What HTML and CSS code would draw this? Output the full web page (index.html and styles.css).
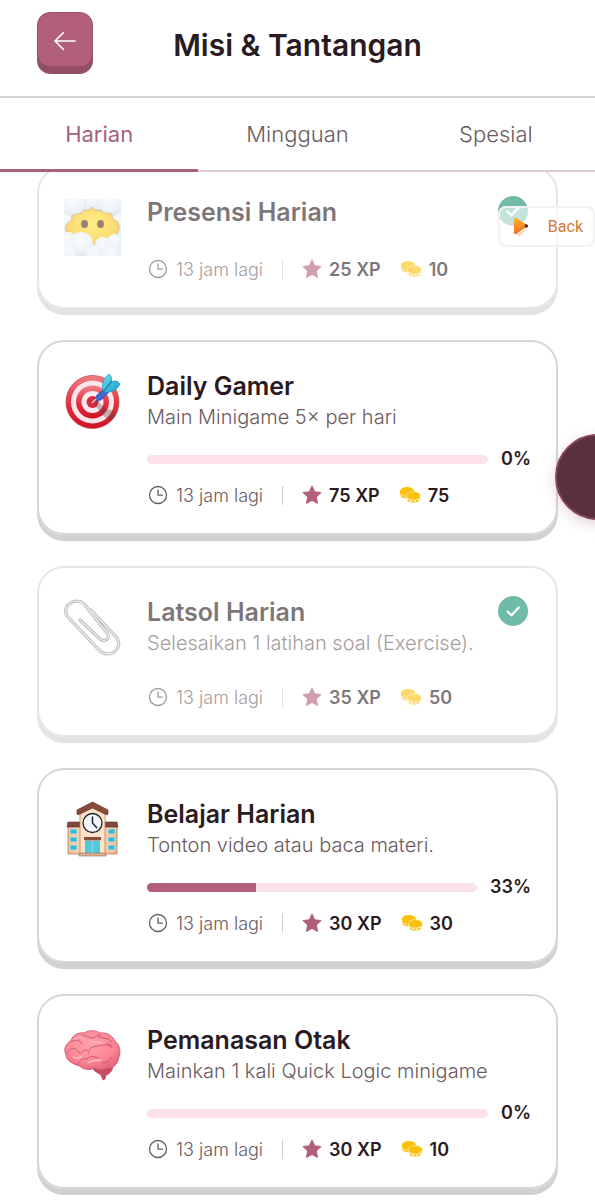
FILE: index.html
```html
<!DOCTYPE html>
<html lang="id">
<head>
<meta charset="utf-8">
<meta name="viewport" content="width=device-width, initial-scale=1">
<title>Misi &amp; Tantangan</title>
<link rel="stylesheet" href="styles.css">
</head>
<body>
<svg class="sprite" aria-hidden="true">
  <symbol id="clock" viewBox="0 0 22 22"><g fill="none" stroke="currentColor" stroke-width="1.300" stroke-linecap="round" stroke-linejoin="round"><circle cx="11" cy="11" r="8.500"/><path d="M11 6v5.200h4.500"/></g></symbol>
  <symbol id="star" viewBox="0 0 20 20"><path d="M10 1.200l2.500 5.600 6.200.7-4.500 4.300 1.200 6.400L10 15.200l-5.400 3 1.200-6.400L1.300 7.500l6.200-.7z" fill="#b15f7c" stroke="#b15f7c" stroke-width="1.200" stroke-linejoin="round"/></symbol>
  <symbol id="coins" viewBox="0 0 22 18"><path d="M1 5v3.500c1 3 4 4 7 4V8z" fill="#fbc108"/><ellipse cx="8" cy="5.200" rx="7.200" ry="4.300" fill="#fbc108"/><path d="M1 7.500c2 3 6 3.200 9 2" fill="none" stroke="#fff" stroke-width="1" stroke-dasharray="2 1.400"/><path d="M7.300 10v3c1 3 4 4 7.300 4s6-1.500 6.700-4v-3z" fill="#fbc108" stroke="#fff" stroke-width=".6"/><ellipse cx="14.300" cy="9.800" rx="7.200" ry="4.200" fill="#fbc108" stroke="#fff" stroke-width=".5"/><path d="M7.800 12.500c2.500 3.500 10.500 3.500 13 0" fill="none" stroke="#fff" stroke-width="1.200" stroke-dasharray="2.200 1.600"/></symbol>
  <symbol id="check" viewBox="0 0 30 30"><circle cx="15" cy="15" r="15" fill="#118d70"/><path d="M9.500 15.500l4 3.800 7.500-8" fill="none" stroke="#fff" stroke-width="2.200" stroke-linecap="round" stroke-linejoin="round"/></symbol>
</svg>

<header class="header">
  <button class="back-button" type="button" aria-label="Kembali">
    <svg width="24" height="24" viewBox="0 0 24 24" fill="none" stroke="#fff" stroke-width="1.600" stroke-linecap="round" stroke-linejoin="round" aria-hidden="true"><path d="M22 12H2M10.500 3.500L2 12l8.500 8.500"/></svg>
  </button>
  <h1 class="title">Misi &amp; Tantangan</h1>
</header>
<nav class="tabs">
  <button class="tab tab-active" type="button">Harian</button>
  <button class="tab" type="button">Mingguan</button>
  <button class="tab" type="button">Spesial</button>
</nav>

<main class="list">
  <article class="card card-done">
    <svg class="emoji" viewBox="0 0 57 57" aria-hidden="true">
      <defs>
        <radialGradient id="face" cx=".5" cy=".45" r=".6"><stop offset="0" stop-color="#ffe53a"/><stop offset="1" stop-color="#f8bc08"/></radialGradient>
        <radialGradient id="puff" cx=".45" cy=".35" r=".65"><stop offset="0" stop-color="#f6fafd"/><stop offset=".7" stop-color="#e2edf5"/><stop offset="1" stop-color="#c6d7e3"/></radialGradient>
        <clipPath id="square"><path d="M0 0h57v57H0z"/></clipPath>
      </defs>
      <g clip-path="url(#square)">
        <path fill="#d5e4ee" d="M0 0h57v57H0z"/>
        <circle cx="4" cy="19" r="11" fill="url(#puff)"/><circle cx="53" cy="19" r="11" fill="url(#puff)"/><circle cx="28" cy="1" r="12" fill="url(#puff)"/><circle cx="10" cy="5" r="13" fill="url(#puff)"/><circle cx="47" cy="4" r="13" fill="url(#puff)"/>
        <path d="M2 29c0-4 2-6 6-8-1-4 1-6 6-6 3 0 4-1 6-4 3 1 5 1 8-3 3 4 5 4 9 3 1 3 3 4 7 3 4 0 5 3 4 6 4 1 7 4 7 8-1 9-7 16-18 17H17C7 43 3 38 2 29z" fill="url(#face)" stroke="#dc9b4b" stroke-width="1.200"/>
        <ellipse cx="20.500" cy="25" rx="3.500" ry="4" fill="#5b2c13"/><ellipse cx="36.500" cy="25" rx="3.500" ry="4" fill="#5b2c13"/>
        <circle cx="4" cy="41" r="8" fill="url(#puff)"/><circle cx="51" cy="43" r="8" fill="url(#puff)"/><circle cx="39" cy="46" r="8" fill="url(#puff)"/><circle cx="17" cy="45" r="12" fill="url(#puff)"/><circle cx="5" cy="53" r="9" fill="url(#puff)"/><circle cx="30" cy="56" r="9" fill="url(#puff)"/><circle cx="47" cy="55" r="10" fill="url(#puff)"/>
      </g>
    </svg>
    <div class="body">
      <h2 class="name">Presensi Harian</h2>
      <div class="meta">
        <span class="time"><svg class="clock"><use href="#clock"/></svg>13 jam lagi</span>
        <span class="reward xp"><svg class="star"><use href="#star"/></svg>25 XP</span>
        <span class="reward"><svg class="coins"><use href="#coins"/></svg>10</span>
      </div>
    </div>
    <svg class="badge" role="img" aria-label="Selesai"><use href="#check"/></svg>
  </article>

  <article class="card">
    <svg class="emoji" viewBox="0 0 57 57" aria-hidden="true">
      <defs>
        <linearGradient id="ring" x1="0" y1="0" x2="0" y2="1"><stop offset="0" stop-color="#ef7f86"/><stop offset=".55" stop-color="#e52d3c"/><stop offset="1" stop-color="#d01326"/></linearGradient>
        <linearGradient id="feather" x1="0" y1="0" x2="1" y2="1"><stop offset="0" stop-color="#75e2ef"/><stop offset="1" stop-color="#159cc7"/></linearGradient>
        <clipPath id="disc"><circle cx="28.500" cy="29" r="27"/></clipPath>
      </defs>
      <circle cx="28.500" cy="29" r="26.500" fill="url(#ring)" stroke="#c64650" stroke-width=".8"/>
      <circle cx="28.500" cy="29" r="21.500" fill="#fbe5e9"/>
      <circle cx="28.500" cy="29" r="16.500" fill="url(#ring)"/>
      <circle cx="28.500" cy="29" r="11" fill="#fdeaee"/>
      <circle cx="28.500" cy="29" r="6" fill="#dc2b39"/>
      <path d="M29 30l5-2 8 8c6 0 10 3 11 7l-7 5-9-7-3-5z" fill="#5a4248" opacity=".35" clip-path="url(#disc)"/>
      <path d="M30 28l3-6 9-7 3 4-8 8z" fill="#3d6ad0" stroke="#2b4ba3" stroke-width=".8"/>
      <path d="M28 30l4-4" stroke="#f1c6ce" stroke-width="1.500"/>
      <path d="M39 17c-2-6 1-12 6-16 3 2 3 5 2 8 4-2 7-1 9 2-3 6-8 9-16 8z" fill="url(#feather)" stroke="#1d91ba" stroke-width=".7"/>
      <path d="M39 19L48 8" stroke="#1287b7" stroke-width="1.300"/>
    </svg>
    <div class="body">
      <h2 class="name">Daily Gamer</h2>
      <p class="desc">Main Minigame 5× per hari</p>
      <div class="progress"><div class="track" role="progressbar" aria-label="Progres Daily Gamer" aria-valuenow="0"><div class="fill" style="width:0%"></div></div><span class="percent">0%</span></div>
      <div class="meta">
        <span class="time"><svg class="clock"><use href="#clock"/></svg>13 jam lagi</span>
        <span class="reward xp"><svg class="star"><use href="#star"/></svg>75 XP</span>
        <span class="reward"><svg class="coins"><use href="#coins"/></svg>75</span>
      </div>
    </div>
  </article>

  <article class="card card-done">
    <svg class="emoji" viewBox="0 0 57 57" aria-hidden="true">
      <g fill="none" stroke-linecap="round" stroke-linejoin="round">
        <path d="M16 21l20 19c5 4 11-1 7-6L21 6C14-3-3 5 3 17l31 33c10 12 26 0 19-11L27 11" stroke="#858d92" stroke-width="3.200"/>
        <path d="M16 21l20 19c5 4 11-1 7-6L21 6C14-3-3 5 3 17l31 33c10 12 26 0 19-11L27 11" stroke="#dfe5e8" stroke-width="1.300"/>
      </g>
    </svg>
    <div class="body">
      <h2 class="name">Latsol Harian</h2>
      <p class="desc">Selesaikan 1 latihan soal (Exercise).</p>
      <div class="meta">
        <span class="time"><svg class="clock"><use href="#clock"/></svg>13 jam lagi</span>
        <span class="reward xp"><svg class="star"><use href="#star"/></svg>35 XP</span>
        <span class="reward"><svg class="coins"><use href="#coins"/></svg>50</span>
      </div>
    </div>
    <svg class="badge" role="img" aria-label="Selesai"><use href="#check"/></svg>
  </article>

  <article class="card">
    <svg class="emoji" viewBox="0 0 57 57" aria-hidden="true">
      <defs><linearGradient id="wall" x1="0" y1="0" x2="1" y2="0"><stop offset="0" stop-color="#f2bd98"/><stop offset=".5" stop-color="#ffe3c6"/><stop offset="1" stop-color="#f1b48e"/></linearGradient></defs>
      <path d="M4 24h49v29H4z" fill="url(#wall)" stroke="#ad7e67" stroke-width=".8"/>
      <path d="M4 21h12v5H3zM41 21h12l1 5H41z" fill="#81483e" stroke="#613129" stroke-width=".6"/>
      <path d="M16 10l12.500-7L41 10v43H16z" fill="#ffe2c5" stroke="#b6866d" stroke-width=".8"/>
      <path d="M13 9l15.500-8L44 9v4l-1 1-14.500-7L14 14l-1-1z" fill="#884b3c" stroke="#653127" stroke-width=".7"/>
      <circle cx="28.500" cy="22" r="9.500" fill="#f1f4fb" stroke="#222733" stroke-width="1.300"/>
      <path d="M28.500 15.500V22l4.500 5" fill="none" stroke="#1e222b" stroke-width="1.500"/>
      <path d="M20 36h17v3H20z" fill="#8b4e3c"/><path d="M21 39h15v13H21z" fill="#c79a83"/>
      <path d="M22 40h5v12h-5zM30 40h5v12h-5z" fill="#4cc8df"/><path d="M28.500 40v12" stroke="#88d9e4" stroke-width="1.500"/>
      <g fill="#33bcd7" stroke="#faebdc" stroke-width=".6"><path d="M6 28h7v5H6zM6 36h7v5H6zM6 44h7v5H6zM44 28h7v5h-7zM44 36h7v5h-7zM44 44h7v5h-7z"/></g>
      <path d="M15 52h27v3H15z" fill="#e0ad92" stroke="#a2796a" stroke-width=".7"/>
    </svg>
    <div class="body">
      <h2 class="name">Belajar Harian</h2>
      <p class="desc">Tonton video atau baca materi.</p>
      <div class="progress"><div class="track" role="progressbar" aria-label="Progres Belajar Harian" aria-valuenow="33"><div class="fill" style="width:33%"></div></div><span class="percent">33%</span></div>
      <div class="meta">
        <span class="time"><svg class="clock"><use href="#clock"/></svg>13 jam lagi</span>
        <span class="reward xp"><svg class="star"><use href="#star"/></svg>30 XP</span>
        <span class="reward"><svg class="coins"><use href="#coins"/></svg>30</span>
      </div>
    </div>
  </article>

  <article class="card">
    <svg class="emoji" viewBox="0 0 57 57" aria-hidden="true">
      <defs><radialGradient id="brain" cx=".45" cy=".35" r=".65"><stop offset="0" stop-color="#ffa2ac"/><stop offset=".7" stop-color="#fb8593"/><stop offset="1" stop-color="#e7687c"/></radialGradient></defs>
      <g transform="translate(0 2)">
      <path d="M28 38c2 5 7 6 9 8l2 5 2-1 1-4c4-1 7-5 7-10z" fill="#c94c63" stroke="#a63c54" stroke-width=".7"/>
      <path d="M7 12c1-6 8-9 13-8 6-4 14-2 16 0 8-1 13 4 15 8 5 4 6 11 4 16-1 7-6 12-11 11-5 3-11 2-14 0-5 3-12 1-14-2C8 35 2 31 2 26c-3-6 0-12 5-14z" fill="url(#brain)" stroke="#ca5268" stroke-width=".8"/>
      <g fill="none" stroke="#cf5a6f" stroke-width="1" stroke-linecap="round"><path d="M7 13c5-4 9-1 11 2M3 24c3-5 8-6 11-2 1 3 3 2 5 0 3-2 5-1 6 2M25 22c2-7 9-3 11-6 5 1 6-2 12 1M19 6c4 0 5 3 9 3 3 0 4-3 8-3M35 8c6 2 10 1 13 5M14 36c0-4 5-7 9-6 4-4 8-2 12-1M44 14c0 3 1 4 4 4M38 34c5 0 8-2 9-6"/></g>
      <path d="M11 10c3-2 6-2 8 0M26 12c6 2 8 1 12 2M24 34c5-4 8-2 13-3M9 28c3 2 7 1 9-1" fill="none" stroke="#ffc0c5" stroke-width="1.300" stroke-linecap="round"/>
      </g>
    </svg>
    <div class="body">
      <h2 class="name">Pemanasan Otak</h2>
      <p class="desc">Mainkan 1 kali Quick Logic minigame</p>
      <div class="progress"><div class="track" role="progressbar" aria-label="Progres Pemanasan Otak" aria-valuenow="0"><div class="fill" style="width:0%"></div></div><span class="percent">0%</span></div>
      <div class="meta">
        <span class="time"><svg class="clock"><use href="#clock"/></svg>13 jam lagi</span>
        <span class="reward xp"><svg class="star"><use href="#star"/></svg>30 XP</span>
        <span class="reward"><svg class="coins"><use href="#coins"/></svg>10</span>
      </div>
    </div>
  </article>
</main>

<button class="float-back" type="button">
  <svg width="18" height="22" viewBox="0 0 18 22" aria-hidden="true"><defs><linearGradient id="play" x1="0" y1="0" x2="0" y2="1"><stop offset="0" stop-color="#ffb52b"/><stop offset="1" stop-color="#f26a1c"/></linearGradient></defs><path d="M3 18l4 3 9-8z" fill="#f7b69a" opacity=".5"/><path d="M2 3.500c0-1.500 1-2 2.500-1.200l9.500 6c1.500 1 1.500 2 0 3L4.500 17.700C3 18.500 2 18 2 16.500z" fill="url(#play)"/><circle cx="14.300" cy="10" r="1.800" fill="#493426"/></svg>
  Back
</button>
<div class="bubble-area"><button class="bubble" type="button" aria-label="Menu"></button></div>
</body>
</html>
```
FILE: styles.css
```css
* { box-sizing: border-box; }
body {
  margin: 0;
  background: #fff;
  color: #2a1a21;
  font-family: Inter, "Liberation Sans", sans-serif;
}
button { font: inherit; border: 0; padding: 0; background: none; cursor: pointer; }
h1, h2, p { margin: 0; }
.sprite { position: absolute; width: 0; height: 0; }

.header {
  display: grid;
  grid-template-columns: 56px 1fr 56px;
  align-items: center;
  padding: 12px 37px 22px;
  border-bottom: 2px solid #d2d0d1;
}
.back-button {
  display: grid;
  place-items: center;
  height: 62px;
  border: 1px solid #96506a;
  border-radius: 13px;
  padding-bottom: 4px;
  background: #b15f7c;
  box-shadow: inset 0 -7px 0 #924e67;
}
.title { padding-top: 4px; font-size: 30px; line-height: 40px; font-weight: 600; text-align: center; white-space: nowrap; }

.tabs { display: grid; grid-template-columns: repeat(3, 1fr); }
.tab {
  height: 74px;
  border-bottom: 2px solid #dfcdd3;
  color: #6b5a61;
  font-size: 22px;
  font-weight: 300;
}
.tab-active { border-bottom: 3px solid #a9607c; color: #a9607c; font-weight: 400; }

.list {
  display: flex;
  flex-direction: column;
  gap: 31px;
  padding: 0 37px 11px;
  overflow: hidden;
}
.card {
  display: flex;
  align-items: flex-start;
  gap: 26px;
  position: relative;
  padding: 27px 25px 24px;
  border: 2px solid #d8d5d6;
  border-radius: 27px;
  box-shadow: 0 6px 0 #d3d0d1;
}
.card-done { opacity: .6; }
.card:first-child { margin-top: -6px; }
.emoji { flex: none; width: 57px; height: 57px; margin-top: 4px; }
.body { flex: 1; min-width: 0; }
.name { font-size: 25px; line-height: 34px; font-weight: 600; }
.desc { color: #6b5a61; font-size: 20px; line-height: 28px; font-weight: 300; white-space: nowrap; }
.badge { position: absolute; top: 28px; right: 28px; width: 30px; height: 30px; }

.progress { display: flex; align-items: center; gap: 13px; margin-top: 16px; }
.track { flex: 1; height: 9px; border-radius: 5px; background: #fbe1e8; overflow: hidden; }
.fill { height: 100%; background: #b15f7c; }
.percent { font-size: 18px; line-height: 24px; font-weight: 600; }

.meta { display: flex; align-items: center; gap: 19px; height: 28px; margin-top: 10px; }
.card-done .meta { margin-top: 26px; }
.time, .reward { display: flex; align-items: center; gap: 7px; white-space: nowrap; }
.time { color: #6b5a61; font-size: 18px; font-weight: 300; }
.reward { font-size: 18px; font-weight: 600; }
.xp::before { content: ""; width: 1px; height: 19px; margin-right: 12px; background: #d5cbd0; }
.clock { width: 22px; height: 22px; }
.star { width: 20px; height: 20px; }
.coins { width: 22px; height: 18px; }

.float-back {
  position: absolute;
  top: 206px;
  right: 0;
  display: flex;
  align-items: center;
  gap: 18px;
  height: 41px;
  padding: 0 10px 0 12px;
  border: 2px solid #f3f1f1;
  border-radius: 8px;
  background: rgb(255 255 255 / 60%);
  color: #d67835;
  font-family: Roboto, sans-serif;
  font-size: 16px;
}
.bubble-area { position: absolute; top: 414px; right: 0; width: 60px; height: 126px; overflow: hidden; pointer-events: none; }
.bubble {
  position: absolute;
  top: 20px;
  left: 20px;
  width: 86px;
  height: 86px;
  border: 2px solid #854360;
  border-radius: 50%;
  background: #5a2f3e;
  box-shadow: 0 4px 14px rgb(177 95 124 / 28%);
  pointer-events: auto;
}
```
